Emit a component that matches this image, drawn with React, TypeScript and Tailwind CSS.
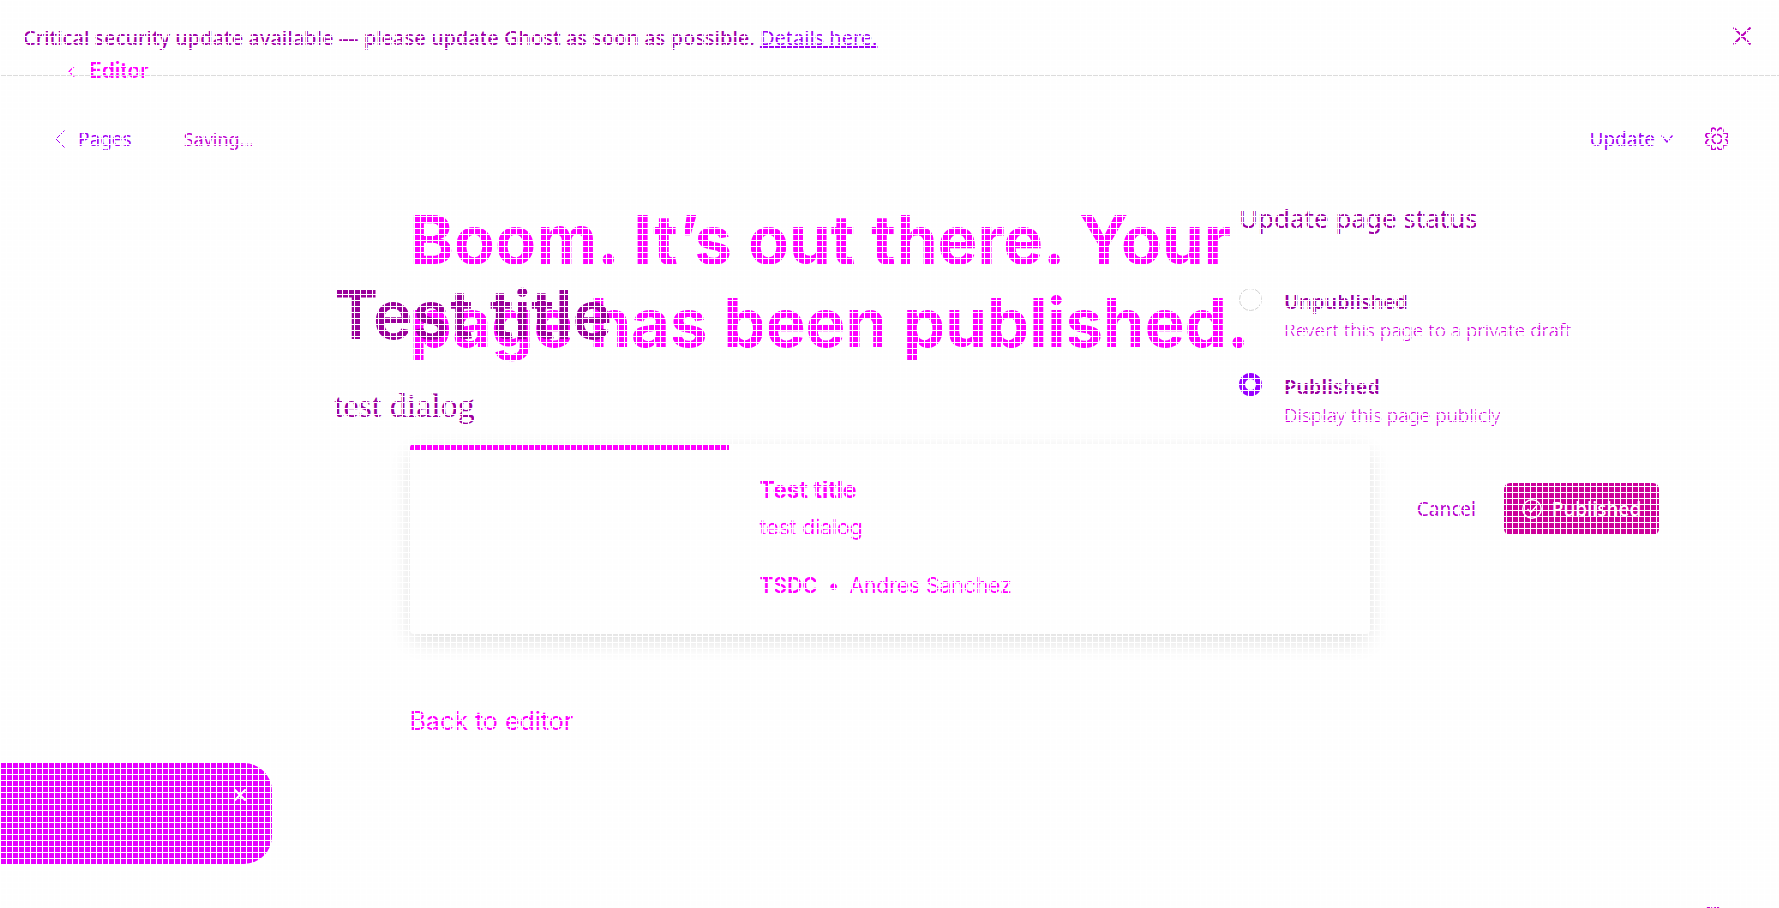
import type { ReactNode } from "react";

const GRID =
  "bg-[linear-gradient(to_right,#fff_1px,transparent_1px),linear-gradient(to_bottom,#fff_1px,transparent_1px)] bg-[size:6px_6px]";

function Cross({ className }: { className: string }) {
  return (
    <svg viewBox="0 0 18 18" fill="none" stroke="currentColor" className={className} aria-hidden="true">
      <path d="M0.5 0.5L17.5 17.5M17.5 0.5L0.5 17.5" />
    </svg>
  );
}

function ChevronLeft({ className }: { className: string }) {
  return (
    <svg viewBox="0 0 10 18" fill="none" stroke="currentColor" className={className} aria-hidden="true">
      <path d="M9.5 0.5L1 9L9.5 17.5" />
    </svg>
  );
}

function Gear({ className }: { className: string }) {
  return (
    <svg viewBox="0 0 24 24" fill="none" stroke="currentColor" strokeWidth="1.8" className={className} aria-hidden="true">
      <circle cx="12" cy="12" r="4.7" />
      <path d="M10.4 2.2L12 3.6L13.8 2.2C14.8 0.6 17.4 0.8 17.8 3L18 6L21 6.2C23.2 6.6 23.8 8.8 22.2 10.1L20.6 12L22.2 13.9C23.8 15.2 23.2 17.4 21 17.8L18 18L17.8 21C17.4 23.2 14.8 23.6 13.6 21.9L12 20.4L10.4 21.9C9.2 23.6 6.6 23.2 6.2 21L6 18L3 17.8C0.8 17.4 0.2 15.2 1.8 13.9L3.4 12L1.8 10.1C0.2 8.8 0.8 6.6 3 6.2L6 6L6.2 3C6.6 0.8 9.2 0.4 10.4 2.2Z" />
    </svg>
  );
}

function Banner() {
  return (
    <header className="flex h-[76px] items-start justify-between border-b border-[#dcdcdc] pt-6 pr-7 pl-[23px] text-xl leading-7 font-medium text-[#a000a8]">
      <p>
        Critical security update available — please update Ghost as soon as possible.{" "}
        <a href="#details" className="font-normal text-[#9f00f5] underline">
          Details here.
        </a>
      </p>
      <button type="button" aria-label="Dismiss" className="mt-[3px] text-[#b800b8]">
        <Cross className="size-[18px] stroke-2" />
      </button>
    </header>
  );
}

function Toolbar() {
  return (
    <nav className="flex items-center justify-between pt-[49px] pr-[50px] pl-[55px] text-[19px] leading-7">
      <div className="flex items-center gap-[52px]">
        <a href="#pages" className="flex items-center gap-[13px] text-[#a400f4]">
          <ChevronLeft className="h-[18px] w-2.5" />
          Pages
        </a>
        <span className="text-lg leading-7 text-[#c000d0]">Saving...</span>
      </div>
      <div className="flex items-center gap-8">
        <button type="button" className="flex items-center gap-1.5 text-[#9c00f4]">
          Update
          <svg viewBox="0 0 12 8" fill="none" stroke="currentColor" strokeWidth="1.3" className="h-2 w-3" aria-hidden="true">
            <path d="M0.5 0.5L6 7L11.5 0.5" />
          </svg>
        </button>
        <button type="button" aria-label="Settings" className="text-[#c400d0]">
          <Gear className="size-6" />
        </button>
      </div>
    </nav>
  );
}

function StatusOption({ title, checked, children }: { title: string; checked?: boolean; children: ReactNode }) {
  return (
    <label className="flex gap-[22px]">
      <input
        type="radio"
        name="status"
        defaultChecked={checked}
        className="mt-px size-[23px] shrink-0 appearance-none rounded-full border border-[#d2d2d2] checked:border-[6px] checked:border-[#9900ff]"
      />
      <span>
        <span className="block text-xl leading-[30px] font-semibold text-[#9a00a0]">{title}</span>
        <span className="block text-[19px] leading-[26px] font-light text-[#d000dc]">{children}</span>
      </span>
    </label>
  );
}

function UpdateMenu() {
  return (
    <form className="absolute top-[200px] right-[120px] w-[420px]" onSubmit={(e) => e.preventDefault()}>
      <h2 className="text-[26px] leading-9 text-[#9c00a4]">Update page status</h2>
      <div className="mt-[51px] flex flex-col gap-[29px]">
        <StatusOption title="Unpublished">Revert this page to a private draft</StatusOption>
        <StatusOption title="Published" checked>
          Display this page publicly
        </StatusOption>
      </div>
      <div className="mt-[55px] flex items-center justify-end gap-7 text-[19px]">
        <button type="button" className="text-[#b800cc]">
          Cancel
        </button>
        <button
          type="submit"
          className="flex h-[52px] w-[155px] items-center justify-center gap-2.5 rounded-md bg-[#cc0099] font-medium text-white"
        >
          <svg viewBox="0 0 20 20" fill="none" stroke="currentColor" strokeWidth="1.5" className="size-5" aria-hidden="true">
            <circle cx="10" cy="10" r="9.2" />
            <path d="M5.5 10L9 13.2L15 6.5" />
          </svg>
          Published
        </button>
      </div>
    </form>
  );
}

function PublishedDialog() {
  return (
    <section className="absolute inset-x-0 top-[57px] font-[Inter,sans-serif] text-[#ff00ff]">
      <a href="#editor" className="ml-[68px] flex h-7 w-fit items-center gap-3.5 text-[21px] font-semibold">
        <ChevronLeft className="h-[11px] w-[7px] stroke-2" />
        Editor
      </a>
      <div className="mx-auto mt-[113px] w-[960px]">
        <h1 className="text-[67px] leading-[83px] font-bold">
          Boom. It’s out there. Your
          <br />
          page has been published.
        </h1>
        <article className="mt-20 flex h-[190px] rounded bg-[#fefefe] shadow-[0_8px_22px_-2px_rgba(0,0,0,0.14)]">
          <div className="w-1/3 rounded-tl border-t-[6px] border-[#ff00ff]" />
          <div className="pt-[30px] pl-[30px]">
            <h2 className="text-[23px] leading-8 font-bold">Test title</h2>
            <p className="mt-2 text-[21px] leading-7">test dialog</p>
            <p className="mt-[30px] flex gap-2.5 text-[21px] leading-7">
              <b className="font-semibold">TSDC</b>
              <span>•</span>
              <span>Andres Sanchez</span>
            </p>
          </div>
        </article>
        <button type="button" className="mt-[69px] text-[25px]">
          Back to editor
        </button>
      </div>
    </section>
  );
}

export default function App() {
  return (
    <div className="relative h-screen overflow-hidden bg-[#fefefe] font-['Noto_Sans',sans-serif]">
      <PublishedDialog />
      <div className="relative">
        <Banner />
        <Toolbar />
        <main className="pt-[122px] pl-[334px]">
          <h1 className="font-[Inter,sans-serif] text-[67px] leading-[80px] font-semibold text-[#990099]">Test title</h1>
          <p className="mt-[29px] font-['Liberation_Serif',serif] text-[34px] leading-[44px] text-[#9c00a0]">test dialog</p>
        </main>
      </div>
      <UpdateMenu />
      <aside className="absolute bottom-11 left-0 flex h-[101px] w-[272px] justify-end rounded-r-[28px] bg-[#e600ff] pt-[26px] pr-[26px] text-white">
        <button type="button" aria-label="Close" className="size-3">
          <Cross className="size-3 stroke-3" />
        </button>
      </aside>
      <button type="button" aria-label="Help" className="absolute right-[54px] -bottom-[22px] text-[#c400d0]">
        <Gear className="size-6" />
      </button>
      <div className={`pointer-events-none absolute inset-0 ${GRID}`} />
    </div>
  );
}
